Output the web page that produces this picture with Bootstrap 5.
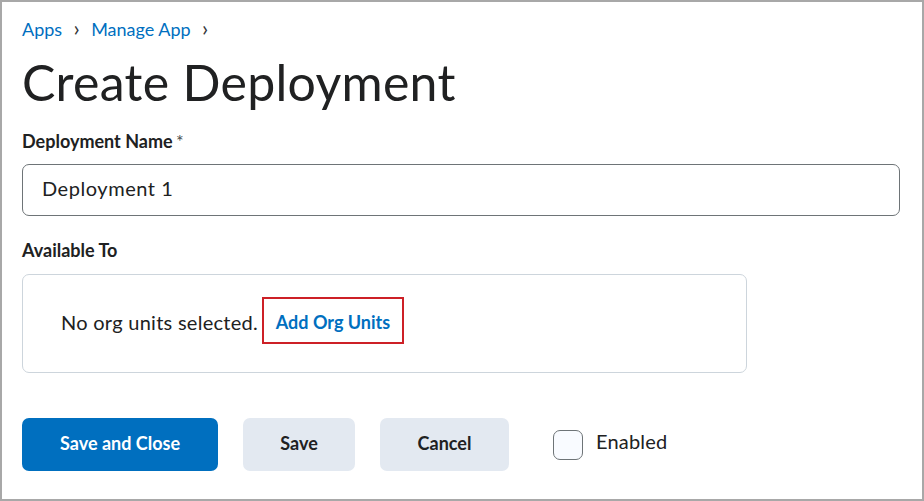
<!DOCTYPE html>
<html lang="en">
  <head>
    <meta charset="UTF-8" />
    <title>Create Deployment</title>
    <link href="https://cdn.jsdelivr.net/npm/bootstrap@5.3.3/dist/css/bootstrap.min.css" rel="stylesheet" />
    <style>
      html, body { height: 100%; }
      body { font-family: Lato, sans-serif; color: #202122; overflow: hidden; }
      .frame { height: 501px; border: 2px solid #a8a8a8; padding: 15px 22px 0 20px; }
      .crumbs { font-size: 18px; line-height: 24px; height: 24px; }
      .crumbs a { color: #006fbf; text-decoration: none; }
      .crumbs .sep { color: #35383a; width: 29px; text-align: center; font-size: 22px; line-height: 22px; }
      h1.page-title { font-size: 50px; font-weight: 400; line-height: 60px; margin: 11px 0 0; letter-spacing: .3px; }
      .field-label { font-size: 18px; font-weight: 700; line-height: 22px; margin: 18px 0 12px; display: block; }
      .field-label small { font-weight: 400; font-size: 18px; color: #494c4e; margin-left: -1px; }
      .form-control.name-input { height: 52px; font-size: 20px; color: #202122; border: 1px solid #6e7477; border-radius: 7px; padding: 0 19px 4px; letter-spacing: .55px; box-shadow: none; }
      .units-label { margin: 23px 0 13px; }
      .units-box { width: 725px; height: 99px; border: 1px solid #cdd5dc; border-radius: 7px; padding-left: 38px; }
      .units-text { font-size: 20px; letter-spacing: .27px; margin-bottom: 4px; }
      .add-units { margin: 0 0 6px 4px; width: 142px; height: 47px; padding-top: 3px; border: 2px solid #cd2026; color: #006fbf; font-size: 18px; font-weight: 700; text-decoration: none; }
      .actions { margin-top: 45px; height: 53px; }
      .btn.act { height: 53px; font-size: 18px; font-weight: 700; border: 0; border-radius: 7px; padding: 0 0 2px; margin-right: 25px; color: #202122; background: #e3e9f1; }
      .btn.act.primary { background: #006fbf; color: #fff; width: 196px; }
      .btn.save { width: 112px; }
      .btn.cancel { width: 129px; }
      .form-check-input.enable-box { width: 30px; height: 30px; margin: 0 13px 0 19px; float: none; background-color: #f9fbff; border: 1px solid #6e7477; border-radius: 7px; }
      .enable-label { font-size: 20px; letter-spacing: .2px; margin-bottom: 8px; }
    </style>
  </head>
  <body class="bg-white">
    <div class="frame">
      <!-- Breadcrumb -->
      <div class="crumbs d-flex">
        <a href="#">Apps</a>
        <span class="sep">›</span>
        <a href="#">Manage App</a>
        <span class="sep">›</span>
      </div>

      <h1 class="page-title">Create Deployment</h1>

      <label class="field-label" for="deploymentName">Deployment Name <small>*</small></label>
      <input id="deploymentName" type="text" class="form-control name-input" value="Deployment 1" />

      <div class="field-label units-label">Available To</div>
      <div class="units-box d-flex align-items-center">
        <span class="units-text">No org units selected.</span>
        <a href="#" class="add-units d-flex align-items-center justify-content-center">Add Org Units</a>
      </div>

      <!-- Action buttons -->
      <div class="actions d-flex align-items-center">
        <button class="btn act primary">Save and Close</button>
        <button class="btn act save">Save</button>
        <button class="btn act cancel">Cancel</button>
        <input id="enabled" class="form-check-input enable-box" type="checkbox" />
        <label class="enable-label" for="enabled">Enabled</label>
      </div>
    </div>
    <script src="https://cdn.jsdelivr.net/npm/bootstrap@5.3.3/dist/js/bootstrap.bundle.min.js"></script>
  </body>
</html>
